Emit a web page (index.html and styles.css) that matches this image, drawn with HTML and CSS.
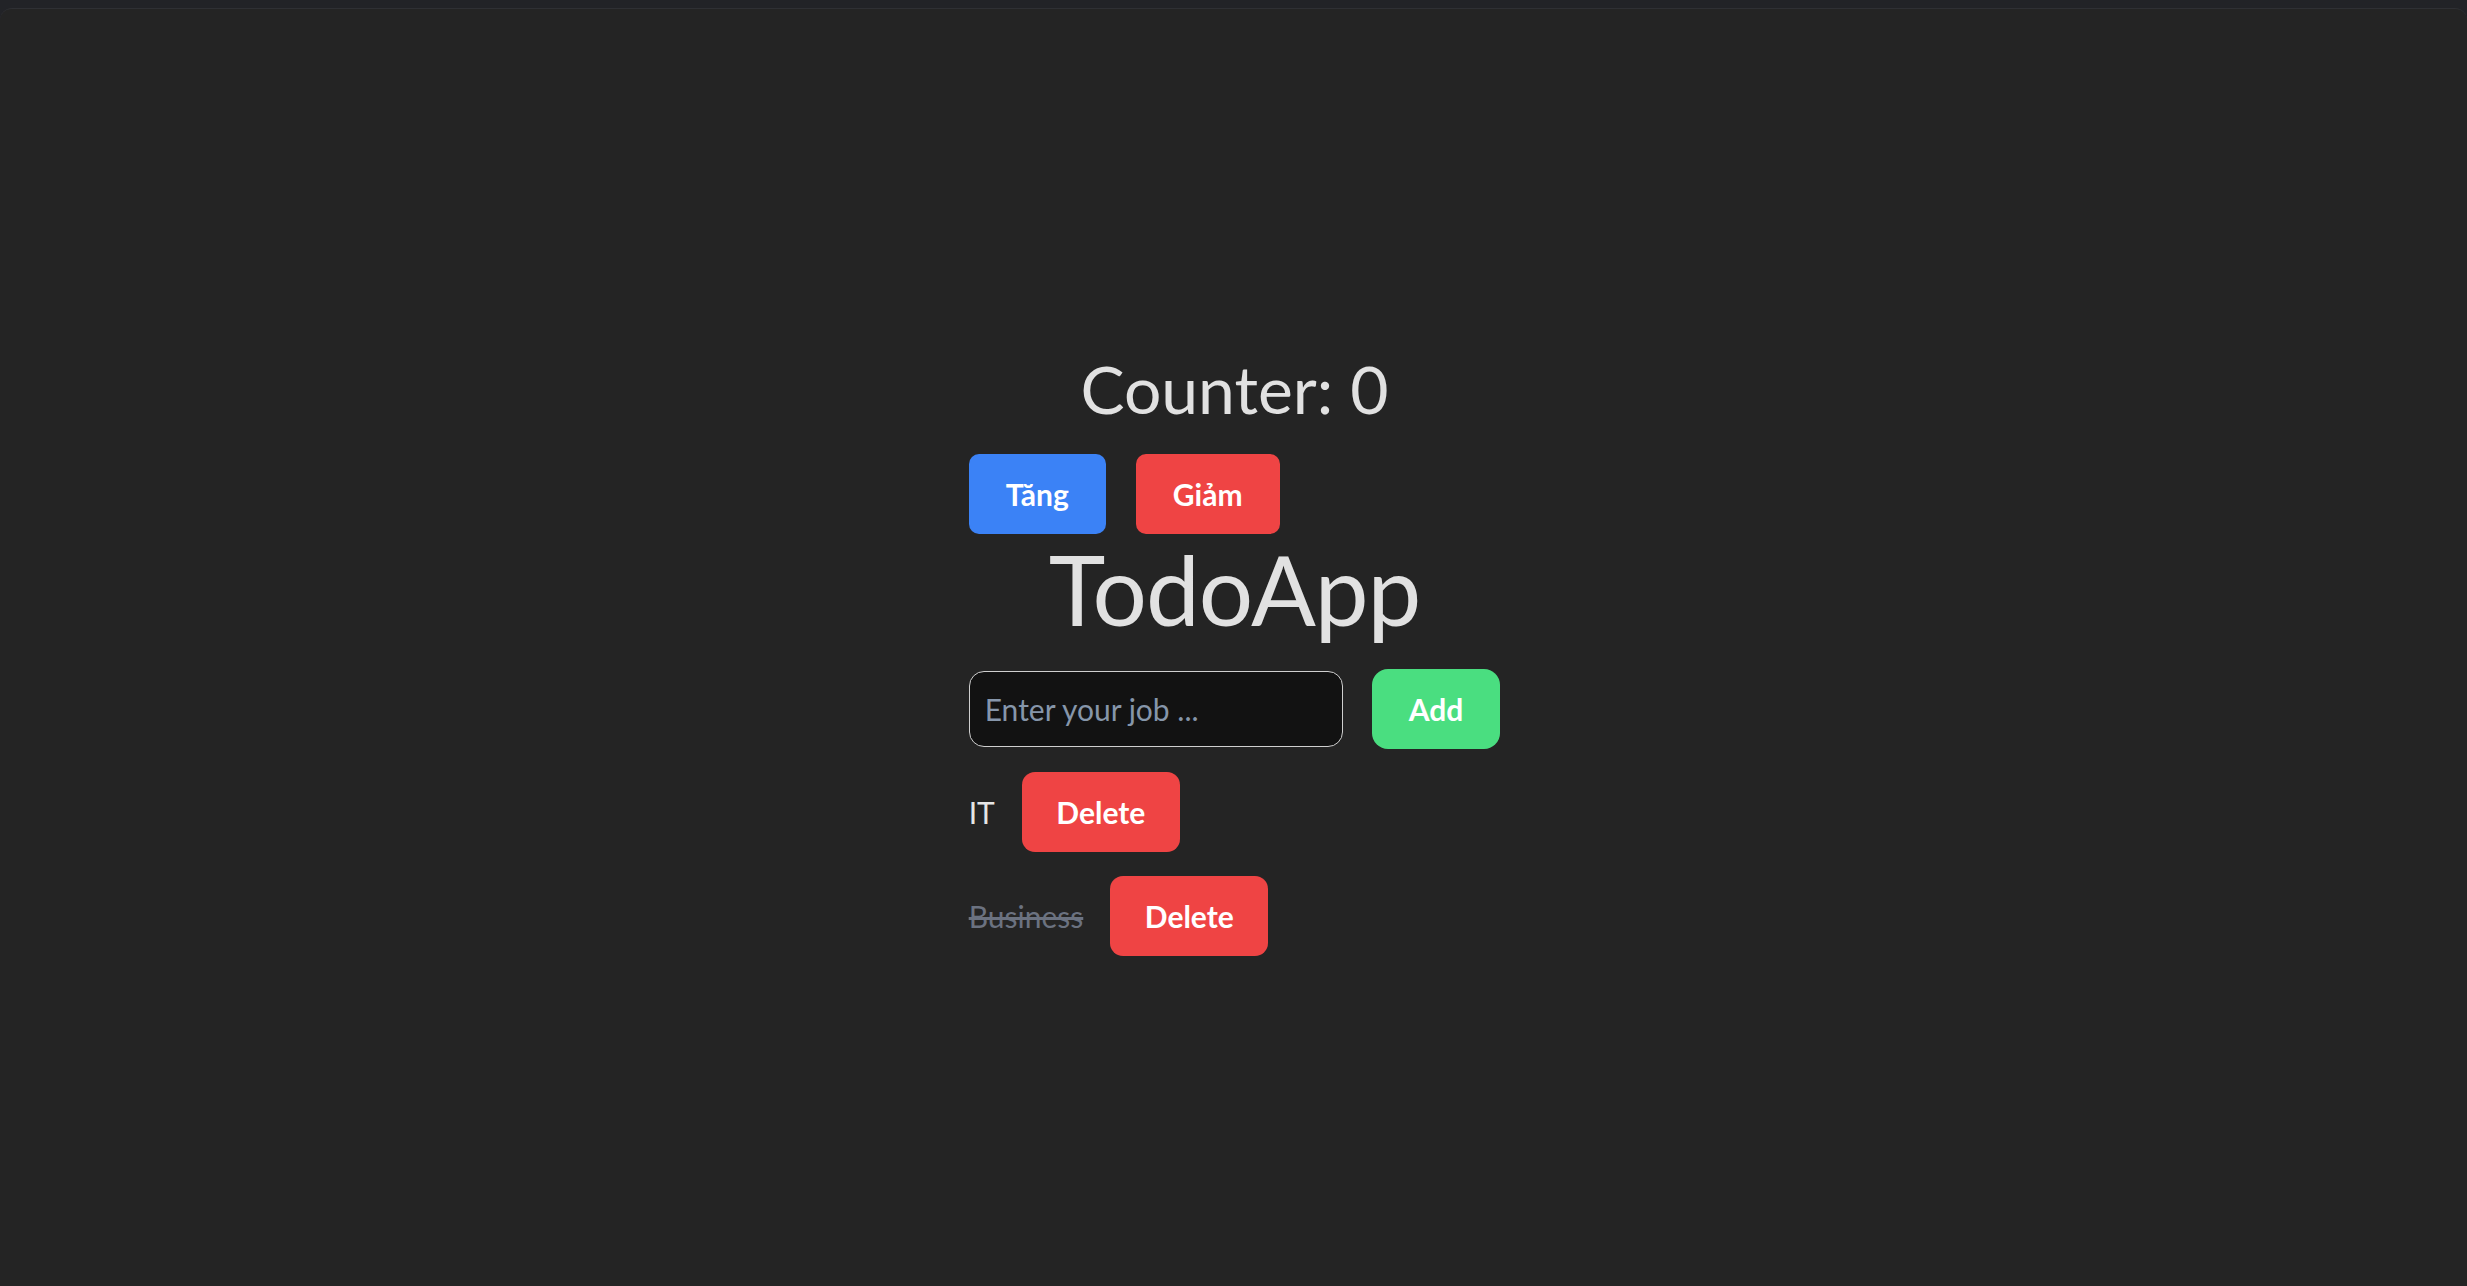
FILE: index.html
```html
<!DOCTYPE html>
<html lang="vi">
<head>
<meta charset="utf-8">
<title>TodoApp</title>
<link rel="stylesheet" href="styles.css">
</head>
<body>
<div class="frame">
  <main class="app">
    <h2 class="counter">Counter: 0</h2>
    <div class="counter-actions">
      <button class="btn btn-blue btn-tang">Tăng</button>
      <button class="btn btn-red btn-giam">Giảm</button>
    </div>
    <h1 class="title">TodoApp</h1>
    <div class="add-row">
      <input class="job-input" type="text" placeholder="Enter your job ...">
      <button class="btn btn-green btn-add">Add</button>
    </div>
    <ul class="todo-list">
      <li class="todo">
        <span class="todo-text">IT</span>
        <button class="btn btn-red btn-del">Delete</button>
      </li>
      <li class="todo done">
        <span class="todo-text">Business</span>
        <button class="btn btn-red btn-del">Delete</button>
      </li>
    </ul>
  </main>
</div>
</body>
</html>
```

FILE: styles.css
```css
html, body {
  margin: 0;
  height: 100%;
}

body {
  background: #222327;
  padding-top: 8px;
  box-sizing: border-box;
  font-family: Lato, "Noto Sans", sans-serif;
  color: #e1e1e1;
}

.frame {
  box-sizing: border-box;
  min-height: calc(100vh - 8px);
  background: #242424;
  border-top: 1px solid #2f3034;
  border-radius: 12px 12px 0 0;
  padding-top: 340px;
  display: flex;
  justify-content: center;
}

.app {
  display: flex;
  flex-direction: column;
  align-items: flex-start;
  width: fit-content;
  margin-left: 2px;
}

.counter {
  margin: 0;
  align-self: stretch;
  text-align: center;
  font-size: 66px;
  font-weight: 400;
  line-height: 80px;
  color: #e1e1e1;
}

.counter-actions {
  display: flex;
  gap: 30px;
  margin-top: 25px;
}

.btn {
  border: none;
  color: #ffffff;
  font-family: inherit;
  font-weight: 700;
  font-size: 30px;
  line-height: 36px;
  padding: 22px 36px;
  cursor: pointer;
}

.btn-blue {
  background: #3b82f6;
}

.btn-red {
  background: #ef4444;
}

.btn-green {
  background: #4ade80;
}

.btn-tang,
.btn-giam {
  border-radius: 10px;
  padding: 22px 37px;
}

.title {
  margin: 5px 0 0;
  align-self: stretch;
  text-align: center;
  font-size: 96px;
  font-weight: 400;
  line-height: 100px;
  letter-spacing: -1px;
  color: #e1e1e1;
}

.add-row {
  display: flex;
  align-items: center;
  gap: 29px;
  margin-top: 30px;
}

.job-input {
  box-sizing: border-box;
  width: 374px;
  height: 76px;
  padding: 0 15px;
  background: #121212;
  border: 1px solid #cfcfcf;
  border-radius: 15px;
  color: #e1e1e1;
  font-family: inherit;
  font-size: 30px;
  outline: none;
}

.job-input::placeholder {
  color: #8696aa;
}

.btn-add {
  border-radius: 16px;
  padding: 22px 37px;
}

.todo-list {
  list-style: none;
  margin: 23px 0 0;
  padding: 0;
  display: flex;
  flex-direction: column;
  gap: 24px;
}

.todo {
  display: flex;
  align-items: center;
  gap: 27px;
}

.todo-text {
  font-size: 30px;
  line-height: 36px;
  color: #e6e6e6;
}

.todo.done .todo-text {
  color: #6b7280;
  text-decoration: line-through;
}

.btn-del {
  border-radius: 13px;
  padding: 22px 34.5px;
}
```
